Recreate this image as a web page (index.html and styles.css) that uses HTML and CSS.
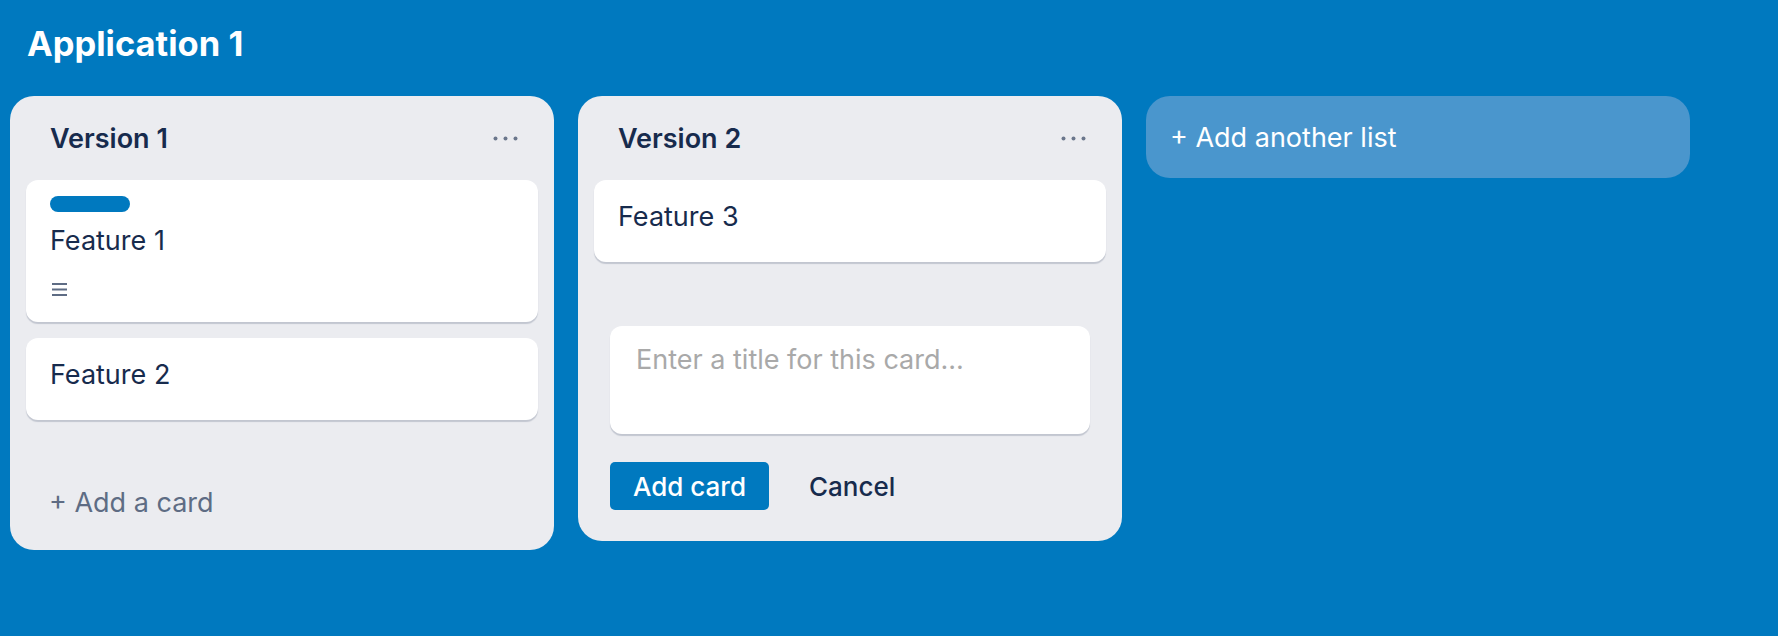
FILE: index.html
```html
<!DOCTYPE html>
<html lang="en">
<head>
  <meta charset="UTF-8" />
  <meta name="viewport" content="width=device-width, initial-scale=1.0"/>
  <title>Application 1</title>
  <link rel="stylesheet" href="styles.css">
</head>
<body>

  <div class="board-header">
    <h1>Application 1</h1>
  </div>

  <div class="board-lists">

    <div class="list">
      <div class="list-header">
        <h2>Version 1</h2>
        <svg class="list-menu" width="25" height="5" viewBox="0 0 25 5">
          <circle cx="2.5" cy="2.5" r="2" />
          <circle cx="12.5" cy="2.5" r="2" />
          <circle cx="22.5" cy="2.5" r="2" />
        </svg>
      </div>
      <div class="card">
        <div class="card-label"></div>
        <div class="card-title">Feature 1</div>
        <div class="card-badges">
          <svg width="15" height="13" viewBox="0 0 15 13">
            <rect x="0" y="0" width="15" height="2" />
            <rect x="0" y="5.5" width="15" height="2" />
            <rect x="0" y="11" width="15" height="2" />
          </svg>
        </div>
      </div>
      <div class="card">
        <div class="card-title">Feature 2</div>
      </div>
      <div class="add-card">+ Add a card</div>
    </div>

    <div class="list">
      <div class="list-header">
        <h2>Version 2</h2>
        <svg class="list-menu" width="25" height="5" viewBox="0 0 25 5">
          <circle cx="2.5" cy="2.5" r="2" />
          <circle cx="12.5" cy="2.5" r="2" />
          <circle cx="22.5" cy="2.5" r="2" />
        </svg>
      </div>
      <div class="card">
        <div class="card-title">Feature 3</div>
      </div>
      <form class="composer">
        <textarea placeholder="Enter a title for this card..."></textarea>
        <div class="composer-controls">
          <button type="submit" class="btn-add">Add card</button>
          <button type="button" class="btn-cancel">Cancel</button>
        </div>
      </form>
    </div>

    <div class="add-list">+ Add another list</div>

  </div>

</body>
</html>
```

FILE: styles.css
```css
body {
  font-family: Inter, 'Noto Sans', sans-serif;
  margin: 0;
  padding: 0;
  background-color: #0079bf;
  color: #172b4d;
}

.board-header {
  padding: 23px 27px 0;
}

.board-header h1 {
  margin: 0;
  font-size: 34.5px;
  line-height: 41px;
  font-weight: 700;
  color: #ffffff;
}

.board-lists {
  display: flex;
  align-items: flex-start;
  gap: 24px;
  padding: 32px 10px;
}

.list {
  width: 544px;
  box-sizing: border-box;
  padding: 0 16px 16px;
  background-color: #ebecf0;
  border-radius: 24px;
}

.list-header {
  display: flex;
  justify-content: space-between;
  align-items: center;
  padding: 26px 20px 25px 24px;
}

.list-header h2 {
  margin: 0;
  font-size: 27px;
  line-height: 33px;
  font-weight: 600;
}

.list-menu {
  fill: #6b778c;
}

.card {
  background-color: #ffffff;
  border-radius: 12px;
  padding: 20px 24px 29px;
  margin-bottom: 16px;
  box-shadow: 0 2px 1px rgba(9, 30, 66, 0.18);
  font-size: 27px;
  line-height: 33px;
}

.card-label {
  width: 80px;
  height: 16px;
  margin: -4px 0 12px;
  border-radius: 8px;
  background-color: #0079bf;
}

.card-badges {
  display: flex;
  margin: 26px 0 -3px 2px;
  fill: #5e6c84;
}

.add-card {
  margin-top: 50px;
  padding: 16px 23px 15px;
  font-size: 27px;
  line-height: 33px;
  color: #5e6c84;
}

.composer {
  margin: 64px 0 0;
  padding: 0 16px 15px;
}

.composer textarea {
  display: block;
  width: 100%;
  height: 108px;
  box-sizing: border-box;
  padding: 17px 26px;
  border: none;
  border-radius: 12px;
  box-shadow: 0 2px 1px rgba(9, 30, 66, 0.18);
  font-family: inherit;
  font-size: 27px;
  line-height: 33px;
  color: #172b4d;
  resize: none;
  outline: none;
}

.composer textarea::placeholder {
  color: #a9a9a9;
}

.composer-controls {
  display: flex;
  align-items: center;
  margin-top: 28px;
}

.btn-add {
  height: 48px;
  padding: 0 23px;
  border: none;
  border-radius: 5px;
  background-color: #0079bf;
  color: #ffffff;
  font-family: inherit;
  font-size: 26px;
  font-weight: 500;
  cursor: pointer;
}

.btn-cancel {
  margin-left: 40px;
  padding: 0;
  border: none;
  background: none;
  color: #172b4d;
  font-family: inherit;
  font-size: 26px;
  font-weight: 500;
  cursor: pointer;
}

.add-list {
  width: 544px;
  box-sizing: border-box;
  padding: 25px 26px 24px 24px;
  background-color: #4a96cd;
  border-radius: 24px;
  color: #ffffff;
  font-size: 27px;
  line-height: 33px;
}
```
